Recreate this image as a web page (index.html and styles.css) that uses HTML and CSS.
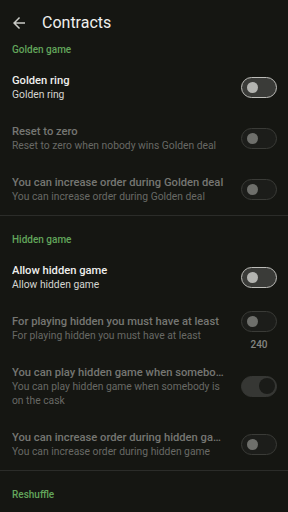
FILE: index.html
```html
<!DOCTYPE html>
<html lang="en">
  <head>
    <meta charset="UTF-8" />
    <meta name="viewport" content="width=device-width, initial-scale=1.0" />
    <title>Contracts</title>
    <link rel="stylesheet" href="styles.css">
  </head>

  <body>
    <div class="appbar">
      <svg class="back" viewBox="0 0 24 24" width="18" height="18">
        <path d="M20 11H7.83l5.59-5.59L12 4l-8 8 8 8 1.41-1.41L7.83 13H20v-2z" fill="#c9cac6" />
      </svg>
      <div class="apptitle">Contracts</div>
    </div>

    <div class="category first">Golden game</div>

    <div class="row">
      <div class="text">
        <div class="title">Golden ring</div>
        <div class="summary">Golden ring</div>
      </div>
      <div class="side"><div class="switch"></div></div>
    </div>

    <div class="row disabled">
      <div class="text">
        <div class="title">Reset to zero</div>
        <div class="summary">Reset to zero when nobody wins Golden deal</div>
      </div>
      <div class="side"><div class="switch"></div></div>
    </div>

    <div class="row disabled">
      <div class="text">
        <div class="title">You can increase order during Golden deal</div>
        <div class="summary">You can increase order during Golden deal</div>
      </div>
      <div class="side"><div class="switch"></div></div>
    </div>

    <div class="divider"></div>

    <div class="category">Hidden game</div>

    <div class="row">
      <div class="text">
        <div class="title">Allow hidden game</div>
        <div class="summary">Allow hidden game</div>
      </div>
      <div class="side"><div class="switch"></div></div>
    </div>

    <div class="row disabled">
      <div class="text">
        <div class="title">For playing hidden you must have at least</div>
        <div class="summary">For playing hidden you must have at least</div>
      </div>
      <div class="side extra">
        <div class="switch"></div>
        <div class="value">240</div>
      </div>
    </div>

    <div class="row disabled">
      <div class="text">
        <div class="title">You can play hidden game when somebody is on the cask</div>
        <div class="summary">You can play hidden game when somebody is on the cask</div>
      </div>
      <div class="side"><div class="switch on"></div></div>
    </div>

    <div class="row disabled">
      <div class="text">
        <div class="title">You can increase order during hidden game</div>
        <div class="summary">You can increase order during hidden game</div>
      </div>
      <div class="side"><div class="switch"></div></div>
    </div>

    <div class="divider"></div>

    <div class="category">Reshuffle</div>
  </body>
</html>
```

FILE: styles.css
```css
body {
  margin: 0;
  background-color: #151612;
  font-family: Roboto, 'Noto Sans', sans-serif;
  color: #efefed;
  width: 288px;
  height: 512px;
  overflow: hidden;
}

.appbar {
  height: 43px;
  display: flex;
  align-items: center;
}

.back {
  margin-left: 10px;
  margin-right: 14px;
  margin-top: 2px;
}

.apptitle {
  font-size: 16px;
  color: #f0f0ee;
  margin-top: 2px;
}

.category {
  color: #62a55b;
  font-size: 10px;
  font-weight: 500;
  line-height: 13px;
  padding: 17px 12px 6px 12px;
}

.category.first {
  padding-top: 0;
}

.row {
  display: flex;
  align-items: center;
  padding: 11px 11px 11px 12px;
}

.text {
  flex: 1;
  min-width: 0;
  padding-right: 14px;
}

.title {
  font-size: 11.2px;
  font-weight: 500;
  line-height: 15px;
  white-space: nowrap;
  overflow: hidden;
  text-overflow: ellipsis;
}

.summary {
  font-size: 10.3px;
  line-height: 14px;
  color: #d4d5d1;
}

.disabled .title {
  color: #757672;
}

.disabled .summary {
  color: #686965;
}

.side {
  width: 36px;
  display: flex;
  flex-direction: column;
  align-items: center;
}

.side.extra {
  margin-top: -3px;
  margin-bottom: -8px;
}

.switch {
  width: 36px;
  height: 21px;
  box-sizing: border-box;
  border-radius: 11px;
  border: 1.5px solid #bdbdb9;
  background-color: #3a3b38;
  position: relative;
}

.switch::after {
  content: '';
  position: absolute;
  left: 4.5px;
  top: 3.5px;
  width: 11px;
  height: 11px;
  border-radius: 50%;
  background-color: #b3b4b0;
}

.disabled .switch {
  border-color: #3a3b37;
  background-color: #1c1d1a;
}

.disabled .switch::after {
  background-color: #6e6f6b;
}

.disabled .switch.on {
  border-color: #363734;
  background-color: #363734;
}

.disabled .switch.on::after {
  left: auto;
  right: 1.5px;
  top: 1px;
  width: 16px;
  height: 16px;
  background-color: #1a1b18;
}

.value {
  margin-top: 7px;
  font-size: 10px;
  line-height: 12px;
  font-weight: 500;
  color: #858682;
}

.divider {
  height: 1px;
  background-color: #2b2c29;
}
```
